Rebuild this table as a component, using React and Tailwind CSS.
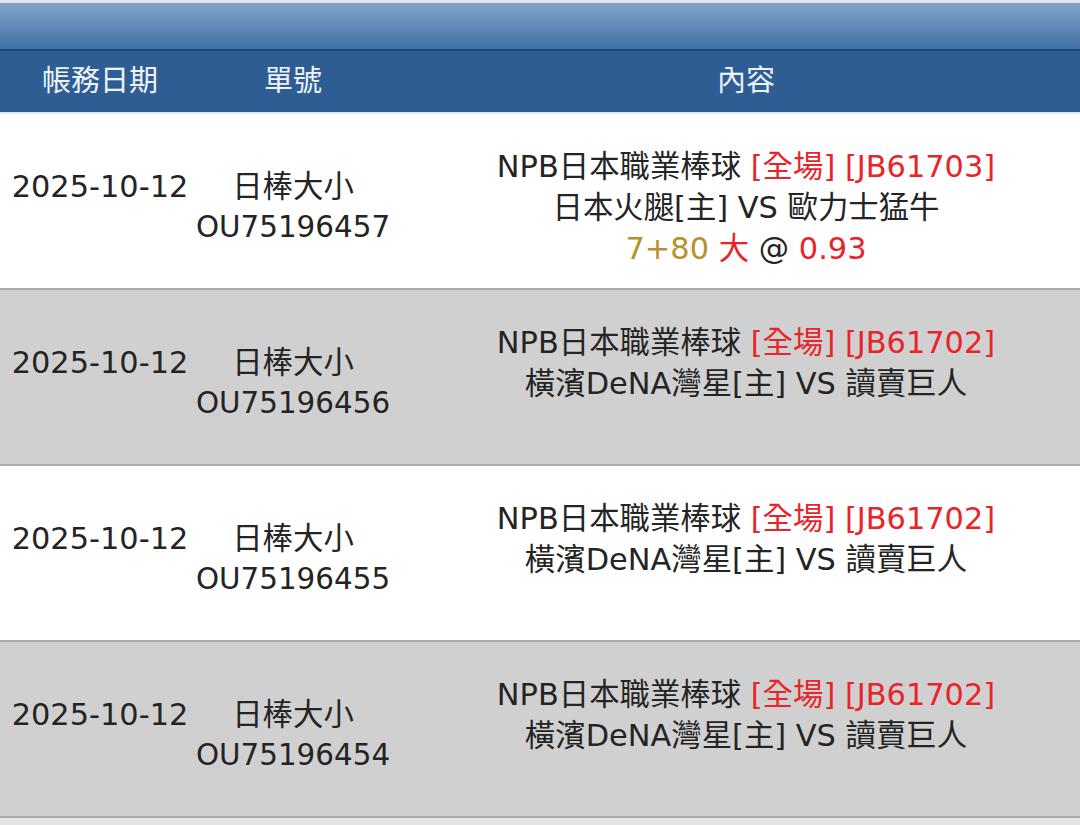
import React from "react";

const rows = [
  { date: "2025-10-12", type: "日棒大小", no: "OU75196457", code: "JB61703", teams: "日本火腿[主] VS 歐力士猛牛", odds: true },
  { date: "2025-10-12", type: "日棒大小", no: "OU75196456", code: "JB61702", teams: "橫濱DeNA灣星[主] VS 讀賣巨人" },
  { date: "2025-10-12", type: "日棒大小", no: "OU75196455", code: "JB61702", teams: "橫濱DeNA灣星[主] VS 讀賣巨人" },
  { date: "2025-10-12", type: "日棒大小", no: "OU75196454", code: "JB61702", teams: "橫濱DeNA灣星[主] VS 讀賣巨人" },
];

const font = { fontFamily: '"DejaVu Sans", "Noto Sans CJK TC", sans-serif' };

export default function App() {
  return (
    <div className="w-[1080px] h-[825px] bg-[#e4e4e4] overflow-hidden" style={font}>
      {/* top bar */}
      <div className="h-[3px] bg-[#e2e4e8]" />
      <div className="h-[46px] bg-gradient-to-b from-[#82a3c8] to-[#4171a5]" />
      <div className="h-[2px] bg-[#1c4875]" />

      {/* column header */}
      <div className="grid grid-cols-[200px_186px_1fr] h-[61px] bg-[#2e5d94] text-[#eef3f8] text-[29px] items-center">
        <div className="text-center">帳務日期</div>
        <div className="text-center">單號</div>
        <div className="text-center pl-[26px]">內容</div>
      </div>
      <div className="h-[2px] bg-[#dfe8f2]" />

      {rows.map((r, i) => (
        <div
          key={r.no}
          className={`grid grid-cols-[200px_186px_1fr] h-[176px] border-b-2 border-[#acacac] items-center pt-3 text-[30.4px] leading-[41px] text-[#242424] ${
            i % 2 === 0 ? "bg-white" : "bg-[#d0d0d0]"
          }`}
        >
          <div className="text-center whitespace-nowrap">
            <div>{r.date}</div>
            <div>&nbsp;</div>
          </div>
          <div className="text-center whitespace-nowrap -mx-[14px]">
            <div>{r.type}</div>
            <div className="text-[29.4px]">{r.no}</div>
          </div>
          <div className="text-center whitespace-nowrap pl-[26px]">
            <div>
              NPB日本職業棒球 <span className="text-[#e8242b]">[全場] [{r.code}]</span>
            </div>
            <div>{r.teams}</div>
            {r.odds ? (
              <div>
                <span className="text-[#b8912c]">7+80</span> <span className="text-[#e8242b]">大</span> @{" "}
                <span className="text-[#e8242b]">0.93</span>
              </div>
            ) : (
              <div>&nbsp;</div>
            )}
          </div>
        </div>
      ))}
    </div>
  );
}
